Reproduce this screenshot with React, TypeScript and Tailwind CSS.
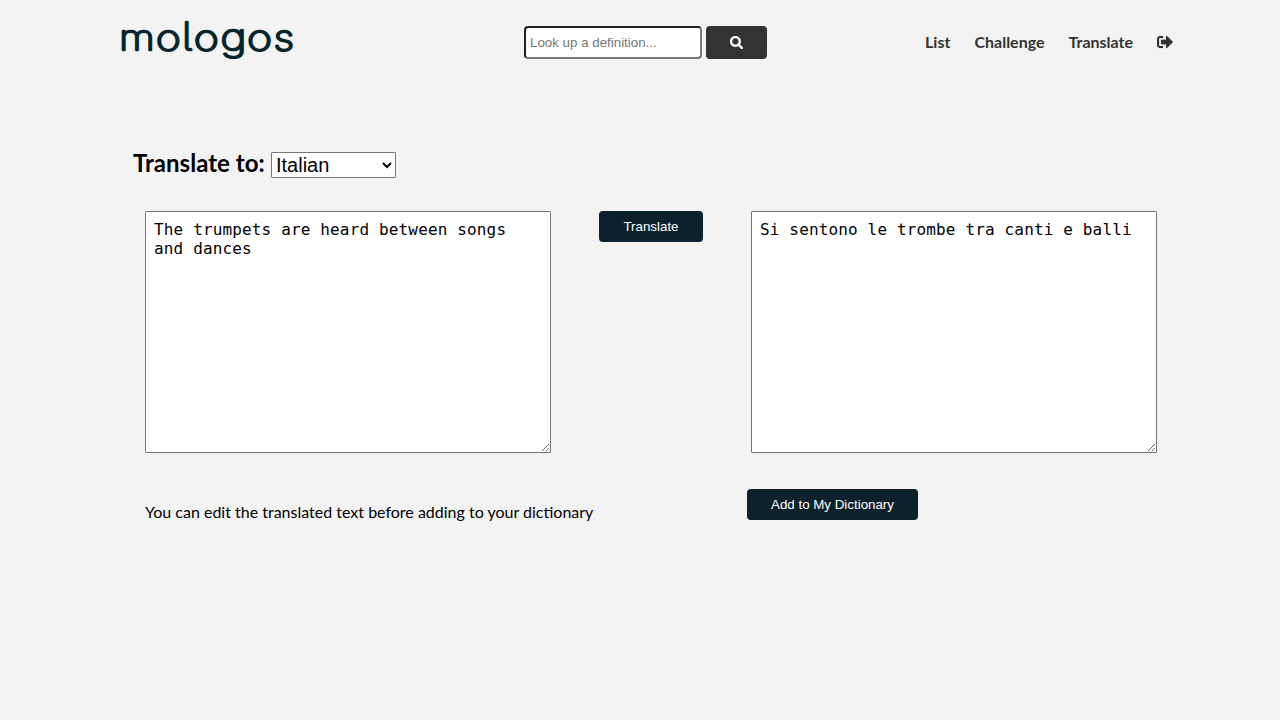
import React from "react";
import { FaSearch, FaSignOutAlt } from "react-icons/fa";

const logoLetters = [
  { char: "m", transform: "translate(17 34.2) scale(1.2 1.01)" },
  { char: "o", transform: "translate(48.3 34.2) scale(1.25 1.01)" },
  { char: "l", transform: "translate(66.9 34.2) scale(1.2 1.1)" },
  { char: "o", transform: "translate(86.2 34.2) scale(1.25 1.01)" },
  { char: "g", transform: "translate(113.6 34.2) scale(1.32 1.04)" },
  { char: "o", transform: "translate(139.5 34.2) scale(1.25 1.01)" },
  { char: "s", transform: "translate(163.8 34.2) scale(1.2 1.01)" },
];

function Logo() {
  return (
    <svg width="180" height="52" viewBox="0 0 180 52" role="img" aria-label="mologos" className="block overflow-visible">
      <g
        fill="#06262d"
        stroke="#06262d"
        strokeWidth="2.8"
        strokeLinejoin="round"
        textAnchor="middle"
        className="font-['Inter',sans-serif] text-[34px] font-thin [font-feature-settings:'cv05']"
      >
        {logoLetters.map((letter, i) => (
          <text key={i} transform={letter.transform} className="[vector-effect:non-scaling-stroke]">
            {letter.char}
          </text>
        ))}
      </g>
    </svg>
  );
}

function Header() {
  return (
    <header className="flex h-[85px] items-start pl-[120px] pr-[107px]">
      <div className="w-[404px] pt-4">
        <Logo />
      </div>
      <form className="flex gap-1 pt-[26px]" onSubmit={(e) => e.preventDefault()}>
        <input
          type="text"
          placeholder="Look up a definition..."
          className="h-[33px] w-[178px] rounded border-2 border-[#767676] bg-white px-1 font-['Liberation_Sans',sans-serif] text-[13.333px] [border-style:inset] placeholder:text-[#757575]"
        />
        <button aria-label="Search" className="flex h-[33px] w-[61px] items-center justify-center rounded bg-[#333333] text-[13.333px] text-white">
          <FaSearch stroke="#ffffff" strokeWidth="12" />
        </button>
      </form>
      <nav className="ml-auto flex gap-6 pt-8 text-base leading-5 font-bold text-[#333333]">
        <a href="#list">List</a>
        <a href="#challenge">Challenge</a>
        <a href="#translate">Translate</a>
        <a href="#logout" aria-label="Log out" className="flex items-center">
          <FaSignOutAlt stroke="#333333" strokeWidth="6" />
        </a>
      </nav>
    </header>
  );
}

const areaClass =
  "block h-[242px] w-[406px] resize rounded-[1px] border border-[#767676] bg-white p-2 font-['DejaVu_Sans_Mono',monospace] text-base leading-[19px] tracking-[0.15px] text-black";
const buttonClass =
  "h-[31px] rounded bg-[#0b222c] px-6 font-['Liberation_Sans',sans-serif] text-[13.333px] text-white";

export default function App() {
  return (
    <div className="h-[720px] overflow-hidden bg-[#f3f3f3] font-['Lato',sans-serif] text-black">
      <Header />
      <main className="pl-[133px] pt-[63px]">
        <div className="flex h-[63px] items-start">
          <label htmlFor="language" className="w-[138px] text-2xl leading-[29px] font-bold tracking-[0.03px]">
            Translate to:
          </label>
          <select
            id="language"
            defaultValue="Italian"
            className="mt-1 h-[26px] w-[125px] rounded-[1px] border border-[#767676] bg-white font-['Liberation_Sans',sans-serif] text-xl leading-6 text-black"
          >
            <option>Italian</option>
            <option>Spanish</option>
            <option>French</option>
          </select>
        </div>
        <section className="flex items-start gap-12 pl-3">
          <textarea spellCheck={false} className={areaClass} defaultValue="The trumpets are heard between songs and dances" />
          <button className={`${buttonClass} w-[104px]`}>Translate</button>
          <textarea spellCheck={false} className={areaClass} defaultValue="Si sentono le trombe tra canti e balli" />
        </section>
        <section className="flex items-start pl-3 pt-9">
          <p className="w-[602px] pt-[13px] text-base leading-5">
            You can edit the translated text before adding to your dictionary
          </p>
          <button className={`${buttonClass} w-[171px]`}>Add to My Dictionary</button>
        </section>
      </main>
    </div>
  );
}
